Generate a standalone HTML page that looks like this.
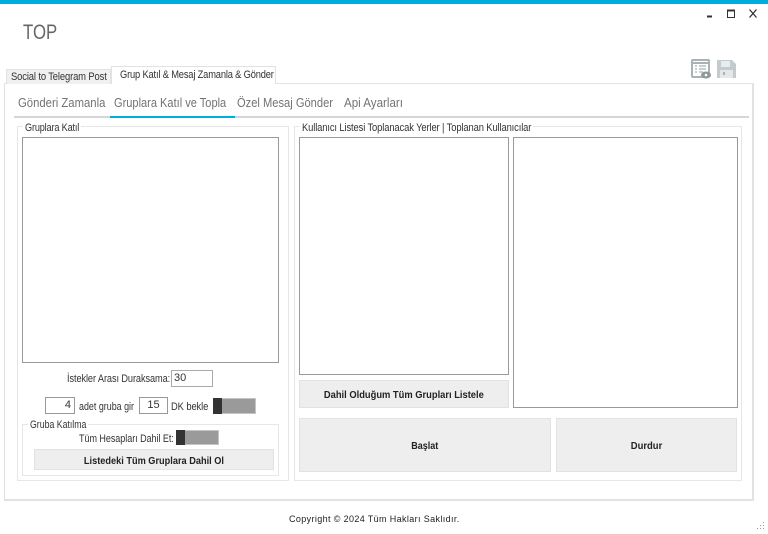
<!DOCTYPE html>
<html lang="tr"><head><meta charset="utf-8"><title>TOP</title>
<style>
html,body{margin:0;padding:0;background:#fff}
#p{position:relative;width:768px;height:534px;overflow:hidden;background:#fff;font-family:"Liberation Sans",sans-serif;font-size:11px;color:#333}
#p div{position:absolute;box-sizing:border-box}
.t{white-space:nowrap;line-height:12px;transform-origin:0 50%}
.sub{font-size:13px;color:#737373;white-space:nowrap;line-height:16px;top:95px;transform-origin:0 50%}
.lb{background:#fff;border:1px solid #999}
.gb{border:1px solid #e6e6e6}
.btn{background:#eee;border:1px solid #e2e2e2;font-weight:bold;font-size:10.5px;color:#222;display:flex;align-items:center;justify-content:center;padding-top:2px}
.btn span{display:inline-block;white-space:nowrap}
.tb{background:#fff;border:1px solid #aaa;font-size:11px;line-height:14px;color:#333}
.leg{background:#fff;height:12px}
</style></head><body><div id="p">
<div style="left:0;top:0;width:768px;height:4px;background:#00aedb"></div>
<div class="t" style="left:23px;top:21px;font-size:21px;line-height:24px;color:#666;transform:scaleX(.8)">TOP</div>
<svg style="position:absolute;left:700px;top:5px" width="68" height="16" fill="none" stroke="#333">
<path d="M7 11.5h5" stroke-width="2"/><rect x="27.5" y="5.5" width="7" height="7" stroke-width="1"/><path d="M27 5.5h8" stroke-width="2"/><path d="M49.5 4.5l7 8M56.5 4.5l-7 8" stroke-width="1.3"/>
</svg>
<svg style="position:absolute;left:690px;top:58px" width="48" height="22" fill="none">
<rect x="2" y="2" width="17" height="17" rx="1" stroke="#a9b2b5" stroke-width="2"/><path d="M3 5h16" stroke="#a9b2b5" stroke-width="2"/>
<path d="M5 8h2M9 8h7M5 11h2M9 11h7M5 14h2M9 14h4" stroke="#a9b2b5" stroke-width="1.2"/>
<ellipse cx="16" cy="17" rx="5" ry="3.5" fill="#8f989b"/><circle cx="16" cy="17" r="1.3" fill="#fff"/>
<path d="M27 2h15l4 4v14H27z" fill="#c3cbce"/><rect x="31" y="3" width="9" height="6" fill="#e8ecee"/><rect x="30" y="12" width="13" height="8" fill="#e4e8ea"/><rect x="33" y="14" width="2" height="3" fill="#aab2b5"/>
</svg>

<div style="left:4px;top:83px;width:750px;height:418px;border:1px solid #e2e2e2;border-width:1px 2px 2px 1px"></div>
<div style="left:6px;top:69px;width:105px;height:15px;background:#f0f0f0;border:1px solid #e2e2e2;border-bottom:0"></div>
<div class="t" style="left:11px;top:71px;transform:scaleX(.855);letter-spacing:-.15px">Social to Telegram Post</div>
<div style="left:111px;top:66px;width:165px;height:18px;background:#fff;border:1px solid #e2e2e2;border-bottom:0"></div>
<div class="t" style="left:120px;top:69px;transform:scaleX(.848);letter-spacing:-.2px">Grup Katıl &amp; Mesaj Zamanla &amp; Gönder</div>

<div class="sub" style="left:18px;transform:scaleX(.87)">Gönderi Zamanla</div>
<div class="sub" style="left:114px;transform:scaleX(.85)">Gruplara Katıl ve Topla</div>
<div class="sub" style="left:237px;transform:scaleX(.857)">Özel Mesaj Gönder</div>
<div class="sub" style="left:344px;transform:scaleX(.89)">Api Ayarları</div>
<div style="left:14px;top:116px;width:735px;height:2px;background:#d6d6d6"></div>
<div style="left:110px;top:116px;width:125px;height:2px;background:#00aedb"></div>

<div class="gb" style="left:17px;top:126px;width:272px;height:355px"></div>
<div class="leg" style="left:23px;top:122px;width:58px"></div>
<div class="t" style="left:25px;top:122px;letter-spacing:-.2px;transform:scaleX(.832)">Gruplara Katıl</div>
<div class="lb" style="left:22px;top:137px;width:257px;height:226px"></div>
<div class="t" style="left:67px;top:373px;letter-spacing:-.1px;transform:scaleX(.835)">İstekler Arası Duraksama:</div>
<div class="tb" style="left:171px;top:370px;width:42px;height:17px;padding-left:2px">30</div>
<div class="tb" style="left:45px;top:397px;width:30px;height:17px;text-align:right;padding-right:3px;border-color:#999">4</div>
<div class="t" style="left:79px;top:401px;transform:scaleX(.81)">adet gruba gir</div>
<div class="tb" style="left:139px;top:397px;width:29px;height:17px;text-align:center;border-color:#999">15</div>
<div class="t" style="left:171px;top:401px;letter-spacing:-.1px;transform:scaleX(.85)">DK bekle</div>
<div style="left:213px;top:398px;width:43px;height:16px;background:#9a9a9a;border:1px solid #c4c4c4"></div>
<div style="left:213px;top:398px;width:9px;height:16px;background:#333"></div>

<div class="gb" style="left:22px;top:424px;width:257px;height:52px"></div>
<div class="leg" style="left:28px;top:418px;width:60px"></div>
<div class="t" style="left:30px;top:419px;transform:scaleX(.795)">Gruba Katılma</div>
<div class="t" style="left:79px;top:433px;letter-spacing:-.05px;transform:scaleX(.82)">Tüm Hesapları Dahil Et:</div>
<div style="left:176px;top:430px;width:43px;height:15px;background:#9a9a9a;border:1px solid #c4c4c4"></div>
<div style="left:176px;top:430px;width:9px;height:15px;background:#333"></div>
<div class="btn" style="left:34px;top:449px;width:240px;height:21px"><span style="transform:scaleX(.876)">Listedeki Tüm Gruplara Dahil Ol</span></div>

<div class="gb" style="left:294px;top:126px;width:448px;height:355px"></div>
<div class="leg" style="left:300px;top:122px;width:233px"></div>
<div class="t" style="left:302px;top:122px;letter-spacing:-.15px;transform:scaleX(.855)">Kullanıcı Listesi Toplanacak Yerler | Toplanan Kullanıcılar</div>
<div class="lb" style="left:299px;top:137px;width:210px;height:238px"></div>
<div class="lb" style="left:513px;top:137px;width:225px;height:271px"></div>
<div class="btn" style="left:299px;top:380px;width:210px;height:28px"><span style="transform:scaleX(.89)">Dahil Olduğum Tüm Grupları Listele</span></div>
<div class="btn" style="left:299px;top:418px;width:252px;height:54px"><span style="transform:scaleX(.86)">Başlat</span></div>
<div class="btn" style="left:556px;top:418px;width:181px;height:54px"><span style="transform:scaleX(.9)">Durdur</span></div>

<div class="t" style="left:289px;top:513px;font-size:9px;letter-spacing:.37px;color:#222">Copyright © 2024 Tüm Hakları Saklıdır.</div>
<svg style="position:absolute;left:756px;top:521px" width="10" height="10" fill="#999"><rect x="7" y="1" width="1" height="1"/><rect x="4" y="4" width="1" height="1"/><rect x="7" y="4" width="1" height="1"/><rect x="1" y="7" width="1" height="1"/><rect x="4" y="7" width="1" height="1"/><rect x="7" y="7" width="1" height="1"/></svg>
</div></body></html>
